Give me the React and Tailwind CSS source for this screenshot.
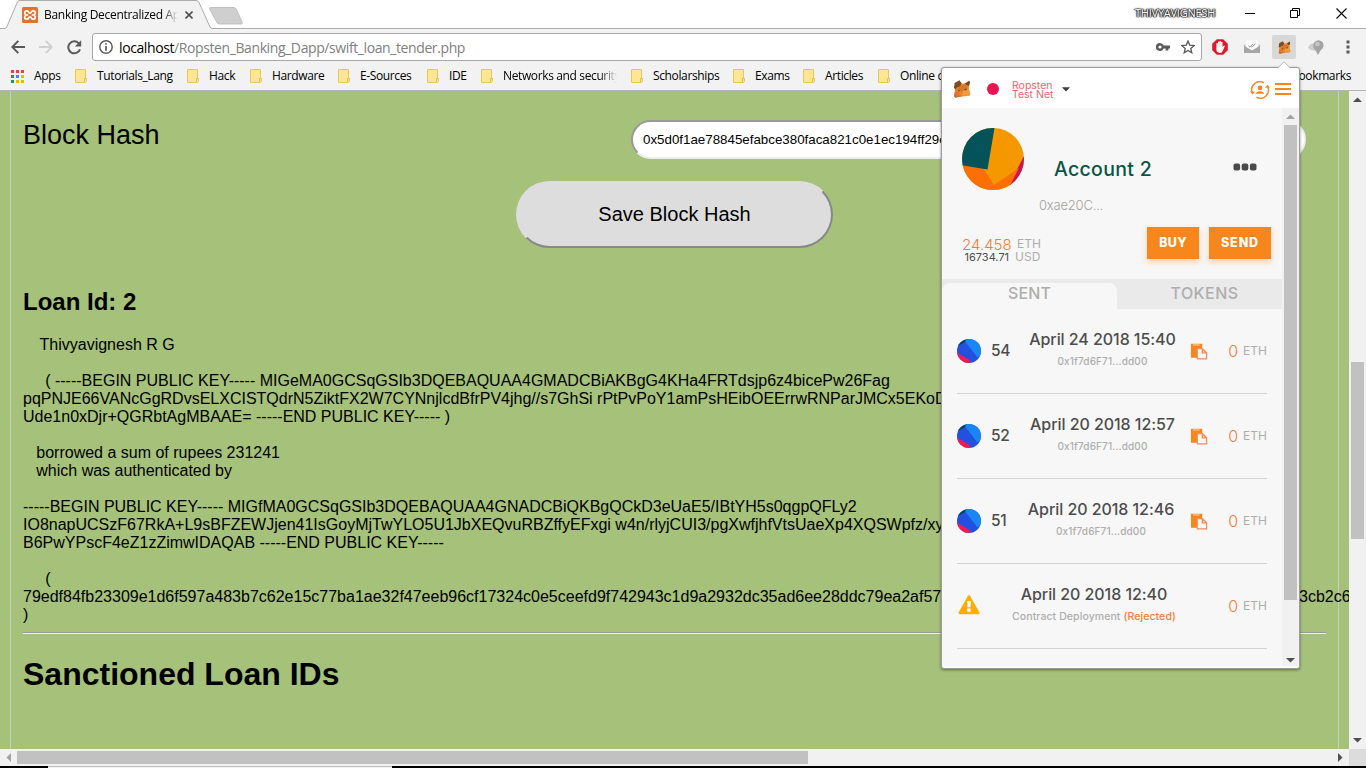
import React from "react";

/* ---------- icons ---------- */

function XamppIcon() {
  return (
    <svg width="16" height="16" viewBox="0 0 16 16" className="shrink-0">
      <rect width="16" height="16" rx="1.5" fill="#e8702a" />
      <path
        d="M6.2 8H4.9A2.1 2.1 0 1 1 6.9 5.6Q8 6.6 9.1 5.6A2.1 2.1 0 1 1 11.1 8H9.8M6.2 8H4.9A2.1 2.1 0 1 0 6.9 10.4Q8 9.4 9.1 10.4A2.1 2.1 0 1 0 11.1 8H9.8"
        fill="none"
        stroke="#fff"
        strokeWidth="1.7"
      />
    </svg>
  );
}

function FoxIcon({ size }) {
  return (
    <svg width={size} height={size} viewBox="0 0 18 18" className="shrink-0">
      <path d="M2.2 4.5L6 1.5L9.5 3.8L13 2.8L16.4 0.8L16.8 3L15.8 8L17.4 14.6L15 16L9 16.6L2.6 17.6L1 16.6L2 10Z" fill="#ea8a2c" />
      <path d="M1.6 3L6.4 0.2L8.6 3.2L7.2 6.6L4.4 7.2L2.6 9.4L1 8Z" fill="#7d4c27" />
      <path d="M12.2 3.4L16.6 0.8L16.8 3L15.6 6L13.6 5Z" fill="#6d4527" />
      <path d="M7.2 6.6L12.4 4L14.6 8.4L8.4 11.8L4.4 9.6Z" fill="#d9752a" />
      <path d="M2 10.4L6 11.8L8.6 16.4L3 17.4L1.2 16Z" fill="#e5762a" />
      <path d="M10 11.6L15.4 9L17.2 14L14 15.8L9.6 15.4Z" fill="#f39a3d" />
      <path d="M4.8 9.8L7.2 10.6L6 11.6Z M11.4 9.6L13.8 8.4L13 10.4Z" fill="#4b3424" />
      <path d="M0.8 15.8L3 15L5.2 16.4L2.4 17.8Z" fill="#a4774f" />
      <path d="M14 15.4L17.2 13.8V15.2L15 16.2Z" fill="#c9a884" />
    </svg>
  );
}

function FolderIcon() {
  return (
    <svg width="12" height="14" viewBox="0 0 12 14" className="shrink-0">
      <path d="M0.5 0.5H10.5V9.5H11.5V12.5L10.5 13.5H0.5Z" fill="#ffe694" stroke="#e8c75c" />
      <path d="M9.5 13.2V9.5H11.4" fill="none" stroke="#e8bf45" />
    </svg>
  );
}

function SmallIdenticon() {
  return (
    <svg width="24" height="24" viewBox="0 0 24 24" className="shrink-0">
      <defs>
        <clipPath id="smallRound"><circle cx="12" cy="12" r="12" /></clipPath>
      </defs>
      <g clipPath="url(#smallRound)">
        <rect width="24" height="24" fill="#2450e0" />
        <path d="M0 0H10V2L0 7.5Z" fill="#04454f" />
        <path d="M8.5 0H24V16L20.5 18.5L8.5 3Z" fill="#1a86f5" />
        <path d="M0 13.8L13 21.5V24H0Z" fill="#fb1850" />
      </g>
    </svg>
  );
}

function CopyIcon() {
  return (
    <svg width="17" height="17" viewBox="0 0 17 17" className="shrink-0">
      <path d="M0 0.8H11.2V5H6V14.8H0Z" fill="#f7861c" />
      <path d="M2 1.3H8.6V2.6H2Z" fill="#f9c69a" />
      <path d="M6.3 5.6H11.4L15.6 9.8V15.8H6.3Z" fill="#f7f7f7" stroke="#f98a5e" strokeWidth="1.2" />
      <path d="M10.6 5V10.4H16Z" fill="#f98a4a" />
      <path d="M12 7.4V9.2H13.8Z" fill="#f7f7f7" />
    </svg>
  );
}

function WarnIcon() {
  return (
    <svg width="22" height="20" viewBox="0 0 22 20" className="shrink-0">
      <path d="M11 1.6L20.2 18H1.8Z" fill="#ffae00" stroke="#ffae00" strokeWidth="2.6" strokeLinejoin="round" />
      <path d="M9.1 6H12.9L12.4 12.2H9.6Z M9.3 13.6H12.7V16.8H9.3Z" fill="#fff" />
    </svg>
  );
}

function Arrow({ dir, color }) {
  const d = {
    up: "M0 5L4.5 0.5L9 5Z",
    down: "M0 0H9L4.5 4.5Z",
    left: "M5 0V9L0.5 4.5Z",
    right: "M0 0V9L4.5 4.5Z",
  }[dir];
  const flat = dir === "up" || dir === "down";
  return (
    <svg width={flat ? 9 : 5} height={flat ? 5 : 9} viewBox={flat ? "0 0 9 5" : "0 0 5 9"} className="shrink-0">
      <path d={d} fill={color} />
    </svg>
  );
}

/* ---------- browser chrome ---------- */

function TitleBar() {
  return (
    <div className="flex h-[29px] shrink-0 border-b border-[#adadad] bg-white">
      <div className="relative h-[29px] w-[245px] shrink-0">
        <svg className="absolute inset-0" width="245" height="29" viewBox="0 0 245 29">
          <path d="M0 28.5H4.5Q6 28.5 6.8 27L17.4 2Q18.2 0.5 20 0.5H196Q198 0.5 198.8 2L210 27Q210.6 28.5 212.5 28.5V29H0Z" fill="#f2f2f2" />
          <path d="M0 28.5H4.5Q6 28.5 6.8 27L17.4 2Q18.2 0.5 20 0.5H196Q198 0.5 198.8 2L210 27Q210.6 28.5 212.5 28.5H245" fill="none" stroke="#adadad" />
          <path d="M210.5 7.5H233.5Q235.5 7.5 236.2 9L242.4 22.4Q243 24 241 24H219.5Q217.5 24 216.8 22.4L209.6 9Q209 7.5 210.5 7.5Z" fill="#cfcfcf" stroke="#b9b9b9" strokeWidth="0.8" />
        </svg>
        <div className="relative flex h-[29px] items-center pl-[22px] pt-px">
          <XamppIcon />
          <div className="ml-[6px] w-[134px] overflow-hidden whitespace-nowrap bg-linear-to-r from-black from-88% to-transparent to-100% bg-clip-text font-['Open_Sans','Noto_Sans',sans-serif] text-[12px] tracking-[-0.3px] text-transparent">
            Banking Decentralized App
          </div>
          <svg className="ml-[7px]" width="8" height="8" viewBox="0 0 8 8">
            <path d="M0.5 0.5L7.5 7.5M7.5 0.5L0.5 7.5" stroke="#505050" strokeWidth="1.6" />
          </svg>
        </div>
      </div>
      <div className="ml-auto flex h-[27px] items-center">
        <span className="font-['Open_Sans','Noto_Sans',sans-serif] text-[11px] tracking-[-0.24px] text-white [text-shadow:0_0_1px_#222,0_0_1px_#222,0_0_2px_#333,0_0_2px_#333,1px_0_1px_#444,-1px_0_1px_#444]">
          THIVYAVIGNESH
        </span>
        <svg className="ml-[30px]" width="11" height="11" viewBox="0 0 11 11"><path d="M0 5.5H10" stroke="#000" /></svg>
        <svg className="ml-[34px]" width="11" height="11" viewBox="0 0 11 11">
          <path d="M0.5 2.5H7.5V9.5H0.5ZM2.5 2.5V0.5H9.5V7.5H7.5" fill="none" stroke="#000" />
        </svg>
        <svg className="ml-[35px] mr-[19px]" width="11" height="11" viewBox="0 0 11 11">
          <path d="M0.5 0.5L10.5 10.5M10.5 0.5L0.5 10.5" stroke="#000" strokeWidth="1.1" />
        </svg>
      </div>
    </div>
  );
}

function Toolbar() {
  return (
    <div className="flex h-[37px] shrink-0 items-center bg-[#f2f2f2] pb-px">
      <svg className="ml-[11px]" width="14" height="14" viewBox="0 0 14 14">
        <path d="M14 7H1.5M7.3 0.9L1.3 7L7.3 13.1" fill="none" stroke="#5a5a5a" strokeWidth="2" />
      </svg>
      <svg className="ml-[14px]" width="14" height="14" viewBox="0 0 14 14">
        <path d="M0 7H12.5M6.7 0.9L12.7 7L6.7 13.1" fill="none" stroke="#d0d0d0" strokeWidth="2" />
      </svg>
      <svg className="ml-[14px]" width="15" height="15" viewBox="0 0 15 15">
        <path d="M13 9.3A6 6 0 1 1 11.8 3.3" fill="none" stroke="#5a5a5a" strokeWidth="2" />
        <path d="M14.2 0.2V6.6H7.8Z" fill="#5a5a5a" />
      </svg>
      <div className="ml-[10px] flex h-[28px] w-[1110px] items-center rounded-[3px] border border-[#a8a8a8] bg-white">
        <svg className="ml-[6px]" width="14" height="14" viewBox="0 0 14 14">
          <circle cx="7" cy="7" r="6.2" fill="none" stroke="#5a5a5a" strokeWidth="1.4" />
          <path d="M7 3.2V4.8M7 6V10.8" stroke="#5a5a5a" strokeWidth="1.7" />
        </svg>
        <span className="ml-[6px] font-['Open_Sans','Noto_Sans',sans-serif] text-[14px] tracking-[-0.4px] text-[#808080]">
          <span className="text-black">localhost</span>/Ropsten_Banking_Dapp/swift_loan_tender.php
        </span>
        <svg className="mb-px ml-auto" width="14" height="8" viewBox="0 0 14 8">
          <path d="M4 0A4 4 0 1 0 7.6 5.4H9.6V7.6H12.4V5.4H14V2.6H7.6A4 4 0 0 0 4 0ZM4 2.4A1.6 1.6 0 1 1 4 5.6A1.6 1.6 0 1 1 4 2.4Z" fill="#5a5a5a" />
        </svg>
        <svg className="ml-[11px] mr-[6px]" width="14" height="14" viewBox="0 0 14 14">
          <path d="M7 1L8.7 5.1L13.2 5.5L9.8 8.4L10.8 12.8L7 10.5L3.2 12.8L4.2 8.4L0.8 5.5L5.3 5.1Z" fill="none" stroke="#5a5a5a" strokeWidth="1.3" />
        </svg>
      </div>
      <svg className="ml-[10px]" width="16" height="16" viewBox="0 0 16 16">
        <path d="M4.8 0.2H11.2L15.8 4.8V11.2L11.2 15.8H4.8L0.2 11.2V4.8Z" fill="#e0182d" />
        <path d="M4.4 9V4.8Q4.4 4 5.1 4T5.9 4.8V3.1Q5.9 2.4 6.6 2.4T7.4 3.1V2.6Q7.5 1.9 8.2 1.9T9 2.7V3.4Q9.1 2.8 9.8 2.8T10.5 3.6V8L11.4 6.9Q12.1 6.3 12.9 6.9L10.9 11.4Q10.1 13.9 7.9 13.9Q4.4 13.9 4.4 10.6Z" fill="#fff" />
        <path d="M5.9 4.6V7.6M7.45 3.4V7.4M9 3.6V7.4" stroke="#f3a4ac" strokeWidth="0.4" />
      </svg>
      <svg className="ml-[16px]" width="16" height="14" viewBox="0 0 16 14">
        <path d="M0 5.2L2 3V1H14V3L16 5.2V13H0Z" fill="#b5b5b5" />
        <path d="M1.4 1.8Q1.4 0.6 2.6 0.6H13.4Q14.6 0.6 14.6 1.8V7.4L8 11L1.4 7.4Z" fill="#fafafa" />
        <path d="M4.4 5.6L6 7.2L9 3.8M7.6 6.8L8 7.2L11.4 3.6" fill="none" stroke="#8a8a8a" strokeWidth="0.9" />
        <path d="M0 5.8L8 10.4L16 5.8V13H0Z" fill="#a6a6a6" />
      </svg>
      <div className="ml-[12px] flex h-6 w-6 items-center justify-center rounded-[2px] bg-[#d8d8d8]">
        <FoxIcon size={13} />
      </div>
      <svg className="ml-[12px]" width="16" height="15" viewBox="0 0 16 15">
        <path d="M0.2 8Q0.8 3.6 5.4 3.4L7.4 10.2Q3 11.6 0.2 8Z" fill="#cdcdcd" />
        <path d="M10.4 0.2A5.2 5.2 0 0 1 15.6 5.4C15.6 8.6 12.2 9.6 11.4 12.6L10 15L8.4 12.2C7.6 9.6 5.2 8.6 5.2 5.4A5.2 5.2 0 0 1 10.4 0.2Z" fill="#a4a4a4" />
        <circle cx="9.4" cy="4.2" r="2.4" fill="#c4c4c4" />
      </svg>
      <svg className="ml-[22px]" width="4" height="14" viewBox="0 0 4 14">
        <path d="M0.5 0.5H3.5V3.5H0.5ZM0.5 5.5H3.5V8.5H0.5ZM0.5 10.5H3.5V13.5H0.5Z" fill="#5a5a5a" />
      </svg>
    </div>
  );
}

const bookmarks = [
  { name: "Tutorials_Lang", w: "w-[112px]" },
  { name: "Hack", w: "w-[63px]" },
  { name: "Hardware", w: "w-[88px]" },
  { name: "E-Sources", w: "w-[89px]" },
  { name: "IDE", w: "w-[54px]" },
  { name: "Networks and security", w: "w-[150px]", fade: true },
  { name: "Scholarships", w: "w-[102px]" },
  { name: "Exams", w: "w-[70px]" },
  { name: "Articles", w: "w-[75px]" },
  { name: "Online courses", w: "w-[110px]" },
];

function BookmarksBar() {
  const dots = ["#ea4335", "#ea4335", "#ea4335", "#0f9d58", "#4285f4", "#f4b400", "#0f9d58", "#f4b400", "#f4b400"];
  return (
    <div className="flex h-[25px] shrink-0 items-center border-b border-[#b6b4b6] bg-[#f2f2f2] pb-[4px] font-['Open_Sans','Noto_Sans',sans-serif] text-[12px] tracking-[-0.37px] text-black">
      <svg className="ml-[11px]" width="13" height="13" viewBox="0 0 13 13">
        {dots.map((c, i) => (
          <rect key={i} x={(i % 3) * 5} y={Math.floor(i / 3) * 5} width="3" height="3" fill={c} />
        ))}
      </svg>
      <span className="ml-[10px] w-[41px]">Apps</span>
      {bookmarks.map((b) => (
        <div key={b.name} className={`flex shrink-0 items-center ${b.w}`}>
          <FolderIcon />
          {b.fade ? (
            <span className="ml-[10px] w-[114px] overflow-hidden whitespace-nowrap bg-linear-to-r from-black from-85% to-transparent bg-clip-text text-transparent">
              {b.name}
            </span>
          ) : (
            <span className="ml-[10px] whitespace-nowrap">{b.name}</span>
          )}
        </div>
      ))}
      <span className="ml-auto mr-[15px]">Other bookmarks</span>
    </div>
  );
}

/* ---------- page ---------- */

function Page() {
  return (
    <div className="h-[658px] w-[1349px] shrink-0 overflow-hidden bg-[#a6c17a] pl-[10px] font-['Liberation_Sans',Arial,sans-serif] text-black">
      <div className="h-full w-[1329px] border-x border-[#cbcbcb] pl-[12px] pt-[29px]">
        <div className="flex h-[39px] items-start">
          <span className="w-[608px] pt-px text-[27px] leading-[29px]">Block Hash</span>
          <div className="flex h-[39px] w-[675px] items-center rounded-[20px] border-2 border-t-[#999] border-l-[#999] border-r-[#eee] border-b-[#eee] bg-white pl-[10px] text-[13.33px]">
            0x5d0f1ae78845efabce380faca821c0e1ec194ff29e
          </div>
        </div>
        <button className="ml-[493px] mt-[22px] flex h-[67px] w-[317px] items-center justify-center rounded-[35px] border-2 border-t-[#ddd] border-l-[#ddd] border-r-[#888] border-b-[#888] bg-[#ddd] pb-[2px] text-[20px]">
          Save Block Hash
        </button>
        <h2 className="mt-[40px] text-[24px] font-bold leading-[28px]">Loan Id: 2</h2>
        <div className="mt-[20px] whitespace-pre text-[16px] leading-[18px]">
          <p className="pl-[16.5px]">Thivyavignesh R G</p>
          <p className="mt-[18px] pl-[22.2px]">( -----BEGIN PUBLIC KEY----- MIGeMA0GCSqGSIb3DQEBAQUAA4GMADCBiAKBgG4KHa4FRTdsjp6z4bicePw26Fag</p>
          <p>pqPNJE66VANcGgRDvsELXCISTQdrN5ZiktFX2W7CYNnjlcdBfrPV4jhg//s7GhSi rPtPvPoY1amPsHEibOEErrwRNParJMCx5EKoD</p>
          <p>Ude1n0xDjr+QGRbtAgMBAAE= -----END PUBLIC KEY----- )</p>
          <p className="mt-[18px] pl-[13.3px]">borrowed a sum of rupees 231241</p>
          <p className="pl-[13.3px]">which was authenticated by</p>
          <p className="mt-[18px]">-----BEGIN PUBLIC KEY----- MIGfMA0GCSqGSIb3DQEBAQUAA4GNADCBiQKBgQCkD3eUaE5/IBtYH5s0qgpQFLy2</p>
          <p>IO8napUCSzF67RkA+L9sBFZEWJjen41IsGoyMjTwYLO5U1JbXEQvuRBZffyEFxgi w4n/rlyjCUI3/pgXwfjhfVtsUaeXp4XQSWpfz/xy</p>
          <p>B6PwYPscF4eZ1zZimwIDAQAB -----END PUBLIC KEY-----</p>
          <p className="mt-[18px] pl-[22.2px]">(</p>
          <p className="flex">
            <span className="w-[1276px] shrink-0">79edf84fb23309e1d6f597a483b7c62e15c77ba1ae32f47eeb96cf17324c0e5ceefd9f742943c1d9a2932dc35ad6ee28ddc79ea2af57</span>
            <span className="shrink-0">3cb2c6</span>
          </p>
          <p>)</p>
        </div>
        <div className="mt-[8px] h-[2px] w-[1303px] border-t border-b border-t-[#9a9a9a] border-b-[#eee]" />
        <h1 className="mt-[22px] text-[32px] font-bold leading-[36px]">Sanctioned Loan IDs</h1>
      </div>
    </div>
  );
}

/* ---------- wallet popup ---------- */

const txs = [
  { n: "54", date: "April 24 2018 15:40", w: "w-[163px]" },
  { n: "52", date: "April 20 2018 12:57", w: "w-[163px]" },
  { n: "51", date: "April 20 2018 12:46", w: "w-[160px]" },
];

function TxAmount() {
  return (
    <span className="ml-auto flex items-center">
      <span className="text-[16px] font-light text-[#f77b3a]">0</span>
      <span className="ml-[5px] text-[12px] text-[#aeaeae]">ETH</span>
    </span>
  );
}

function Wallet() {
  return (
    <div className="absolute left-[941px] top-[67px] h-[602px] w-[359px] rounded-[3px] border border-[#9c9c9c] bg-white font-['Inter',sans-serif] shadow-[0_1px_3px_rgba(0,0,0,0.45)]">
      <svg className="absolute -top-[7px] left-[334px]" width="16" height="8" viewBox="0 0 16 8">
        <path d="M0 7.5H1.5L8 0.8L14.5 7.5H16V8H0Z" fill="#fff" />
        <path d="M1.5 7.2L8 0.8L14.5 7.2" fill="none" stroke="#b8b8b8" />
      </svg>
      <div className="flex h-[40px] items-center">
        <span className="ml-[11px] mt-[2px] flex"><FoxIcon size={18} /></span>
        <span className="ml-[16px] mt-[2px] h-3 w-3 rounded-full bg-[#e91550]" />
        <div className="ml-[13px] mt-[3px] flex w-[48px] flex-col text-[10.5px] leading-[9px] text-[#f8626a]">
          <span>Ropsten</span>
          <span className="whitespace-nowrap">Test Net</span>
        </div>
        <svg className="ml-[2px] mt-[3px]" width="8" height="5" viewBox="0 0 8 5"><path d="M0 0.3H8L4 4.6Z" fill="#3c3c3c" /></svg>
        <svg className="ml-auto mt-[3px]" width="20" height="18" viewBox="0 0 20 18">
          <path d="M2.2 11.4A8 8 0 0 1 14 1.9M17.8 6.2A8 8 0 0 1 6.5 16.2" fill="none" stroke="#f7861c" strokeWidth="1.4" />
          <path d="M0 10.2L5 10.8L2.6 13.6ZM14.8 6.4L19.6 7L18 3.8Z" fill="#f7861c" />
          <circle cx="10" cy="6.9" r="2.4" fill="#f7861c" />
          <path d="M5.8 12.8Q6.2 10.2 10 10.2T14.2 12.8Z" fill="#f7861c" />
        </svg>
        <svg className="ml-[5px] mr-[8px] mt-[2px]" width="16" height="12" viewBox="0 0 16 12">
          <path d="M0 1H16M0 6H16M0 11H16" stroke="#f7861c" strokeWidth="2" />
        </svg>
      </div>
      <div className="flex h-[558px]">
        <div className="h-full w-[340px] overflow-hidden bg-[#f7f7f7]">
          <div className="flex h-[119px] items-start">
            <svg className="ml-[20px] mt-[20px] shrink-0" width="62" height="62" viewBox="0 0 62 62">
              <defs>
                <clipPath id="bigRound"><circle cx="31" cy="31" r="31" /></clipPath>
              </defs>
              <g clipPath="url(#bigRound)">
                <rect width="62" height="62" fill="#f59800" />
                <path d="M62 28L47 57L54 62L62 50Z" fill="#c9145a" />
                <path d="M0 36.8L20 38L32 57L57 40L48.3 57L44 62H0Z" fill="#fc6f04" />
                <path d="M0 0H32.5L25.5 41.5L0 37.2Z" fill="#04525a" />
              </g>
            </svg>
            <div className="ml-[15px]">
              <div className="mt-[49px] pl-[15px] text-[19.5px] font-medium leading-[24px] tracking-[0.3px] text-[#0a5448]">Account 2</div>
              <div className="mt-[15px] text-[13px] font-light leading-[18px] tracking-[-0.2px] text-[#a2a2a2]">0xae20C...</div>
            </div>
            <svg className="ml-auto mr-[25px] mt-[55px]" width="24" height="8" viewBox="0 0 24 8">
              <rect x="0.5" y="0.4" width="6.6" height="7" rx="2" fill="#4a4a4a" />
              <rect x="8.7" y="0.4" width="6.6" height="7" rx="2" fill="#4a4a4a" />
              <rect x="16.9" y="0.4" width="6.6" height="7" rx="2" fill="#4a4a4a" />
            </svg>
          </div>
          <div className="flex h-[52px] items-start">
            <div className="ml-[20px] mt-[11px] w-[50px]">
              <div className="text-[15px] font-light leading-[13px] text-[#f77b3a]">24.458</div>
              <div className="pl-[2.5px] text-[11px] leading-[12px] text-[#4d4d4d]">16734.71</div>
            </div>
            <div className="ml-[3px] mt-[10px] text-[12px] font-normal text-[#aeaeae]">
              <div className="pl-[2px] leading-[14px]">ETH</div>
              <div className="leading-[12px]">USD</div>
            </div>
            <button className="ml-auto flex h-[32px] w-[52px] items-center justify-center bg-[#f7861c] pt-px text-[12.5px] font-extrabold tracking-[0.3px] text-white shadow-[0_3px_6px_rgba(247,134,28,0.36)]">BUY</button>
            <button className="ml-[10px] mr-[11px] flex h-[32px] w-[62px] items-center justify-center bg-[#f7861c] pt-px text-[12.5px] font-extrabold tracking-[0.9px] text-white shadow-[0_3px_6px_rgba(247,134,28,0.36)]">SEND</button>
          </div>
          <div className="flex h-[30px] bg-[#eaeaea] text-[16px] font-medium text-[#aeaeae]">
            <div className="mt-[4px] h-[26px] w-[175px] shrink-0 rounded-t-[8px] bg-[#f7f7f7] text-center leading-[21px] tracking-[0.1px]">SENT</div>
            <div className="-mr-[10px] mt-[4px] w-[175px] shrink-0 text-center leading-[21px] tracking-[0.45px]">TOKENS</div>
          </div>
          {txs.map((t) => (
            <div key={t.n} className="mx-[15px] flex h-[85px] items-center border-b border-[#d2d2d2]">
              <SmallIdenticon />
              <span className="ml-[10px] w-[30px] text-[15.5px] font-medium tracking-[-0.3px] text-[#4d4d4d]">{t.n}</span>
              <div className={`mb-[5px] shrink-0 text-center ${t.w}`}>
                <div className="text-[16px] font-medium leading-[19px] tracking-[-0.06px] text-[#4d4d4d]">{t.date}</div>
                <div className="mt-[5px] text-[10px] font-medium leading-[14px] tracking-[0.13px] text-[#aeaeae]">0x1f7d6F71...dd00</div>
              </div>
              <span className={t.n === "51" ? "ml-[10px]" : "ml-[7px]"}><CopyIcon /></span>
              <TxAmount />
            </div>
          ))}
          <div className="mx-[15px] flex h-[85px] items-center border-b border-[#d2d2d2]">
            <span className="mb-[2px] ml-px"><WarnIcon /></span>
            <div className="mb-[4px] ml-[24px] w-[180px] shrink-0 text-center">
              <div className="text-[16px] font-medium leading-[18px] tracking-[-0.06px] text-[#4d4d4d]">April 20 2018 12:40</div>
              <div className="mt-[6px] whitespace-nowrap text-[10.5px] font-medium leading-[15px] tracking-[0.09px] text-[#aeaeae]">
                Contract Deployment <span className="text-[#f77b3a]">(Rejected)</span>
              </div>
            </div>
            <TxAmount />
          </div>
        </div>
        <div className="flex w-[17px] flex-col items-center bg-[#f1f1f1]">
          <div className="flex h-[17px] items-center"><Arrow dir="up" color="#a3a3a3" /></div>
          <div className="h-[475px] w-[13px] bg-[#c1c1c1]" />
          <div className="mt-auto flex h-[11px] items-center"><Arrow dir="down" color="#505050" /></div>
        </div>
      </div>
    </div>
  );
}

/* ---------- app ---------- */

export default function App() {
  return (
    <div className="relative flex h-[768px] w-[1366px] flex-col overflow-hidden">
      <TitleBar />
      <Toolbar />
      <BookmarksBar />
      <div className="flex shrink-0">
        <Page />
        <div className="flex h-[658px] w-[17px] flex-col items-center bg-[#f1f1f1]">
          <div className="flex h-[17px] items-center"><Arrow dir="up" color="#505050" /></div>
          <div className="mt-[254px] h-[177px] w-[13px] bg-[#c1c1c1]" />
          <div className="mt-auto flex h-[18px] items-center"><Arrow dir="down" color="#505050" /></div>
        </div>
      </div>
      <div className="flex h-[17px] shrink-0 bg-[#dcdcdc]">
        <div className="flex w-[1349px] items-center bg-[#f1f1f1]">
          <div className="flex w-[17px] justify-center"><Arrow dir="left" color="#a3a3a3" /></div>
          <div className="h-[13px] w-[791px] bg-[#c1c1c1]" />
          <div className="ml-auto flex w-[17px] justify-center"><Arrow dir="right" color="#505050" /></div>
        </div>
      </div>
      <div className="flex h-[2px] shrink-0 bg-black">
        <div className="ml-[48px] h-[2px] w-[344px] border-t border-[#bdbdbd] bg-[#f4f4f4]" />
      </div>
      <Wallet />
    </div>
  );
}
